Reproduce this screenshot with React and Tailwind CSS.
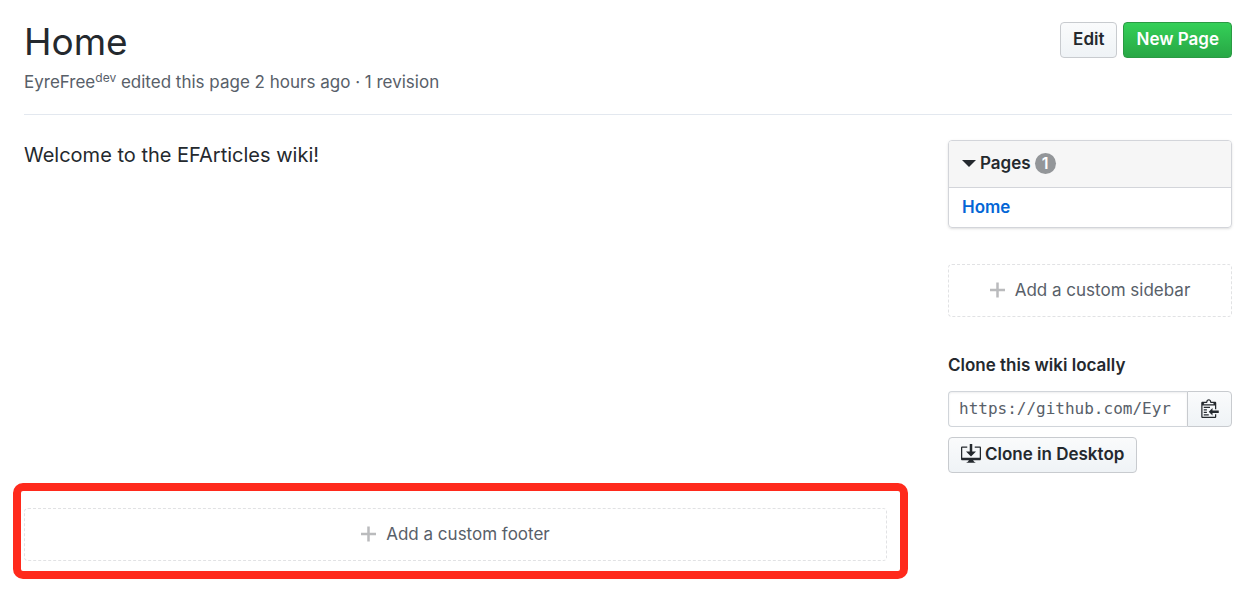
import React from "react";

const PlusIcon = () => (
  <svg viewBox="0 0 12 16" className="h-5 w-[15px] fill-[#babbbd]" aria-hidden="true">
    <path d="M12 9H7v5H5V9H0V7h5V2h2v5h5z" />
  </svg>
);

const ClipboardIcon = () => (
  <svg viewBox="0 0 14 16" className="h-5 w-[18px] fill-[#24292e]" aria-hidden="true">
    <path d="M2 13h4v1H2v-1zm5-6H2v1h5V7zm2 3V8l-3 3 3 3v-2h5v-2H9zM4.5 9H2v1h2.5V9zM2 12h2.5v-1H2v1zm9 1h1v2c-.02.28-.11.52-.3.7-.19.18-.42.28-.7.3H1c-.55 0-1-.45-1-1V4c0-.55.45-1 1-1h3c0-1.11.89-2 2-2 1.11 0 2 .89 2 2h3c.55 0 1 .45 1 1v5h-1V6H1v9h10v-2zM2 5h8c0-.55-.45-1-1-1H8c-.55 0-1-.45-1-1s-.45-1-1-1-1 .45-1 1-.45 1-1 1H3c-.55 0-1 .45-1 1z" />
  </svg>
);

const DesktopDownloadIcon = () => (
  <svg viewBox="0 0 16 16" className="size-5 fill-[#24292e]" aria-hidden="true">
    <path d="M4 6h3V0h2v6h3l-4 4-4-4zm11-4h-4v1h4v8H1V3h4V2H1c-.55 0-1 .45-1 1v9c0 .55.45 1 1 1h5.34c-.25.61-.86 1.39-2.34 2h8c-1.48-.61-2.09-1.39-2.34-2H15c.55 0 1-.45 1-1V3c0-.55-.45-1-1-1z" />
  </svg>
);

const grayButton =
  "flex items-center justify-center border border-[#c8cbcf] bg-linear-to-b from-[#fafbfc] to-[#eff3f6] pb-0.5 font-semibold";

function AddBlock({ children }) {
  return (
    <a
      href="#new"
      className="flex h-[53px] items-center justify-center gap-2.5 rounded border border-dashed border-[#e1e2e4] pb-0.5 text-[#586069]"
    >
      <PlusIcon />
      {children}
    </a>
  );
}

export default function App() {
  return (
    <div className="bg-white pt-[22px] pr-2 pb-7 pl-6 font-[Inter,sans-serif] text-[17px] leading-6 text-[#24292e]">
      <header className="flex items-start justify-between border-b border-[#e3e8ef] pb-5">
        <div>
          <h1 className="text-[37px] leading-10">Home</h1>
          <p className="mt-2 text-[#586069]">
            EyreFree<sup className="text-xs">dev</sup> edited this page 2 hours ago · 1 revision
          </p>
        </div>
        <div className="flex gap-1.5">
          <button className={`${grayButton} h-9 rounded px-3`}>Edit</button>
          <button className="flex h-9 items-center rounded border border-[#2a9a43] bg-linear-to-b from-[#34d058] to-[#28a745] px-3 pb-0.5 font-semibold text-white">
            New Page
          </button>
        </div>
      </header>

      <div className="flex gap-[61px] pt-[25px]">
        <main className="flex min-w-0 flex-1 flex-col">
          <p className="text-[20px] leading-[30px]">Welcome to the EFArticles wiki!</p>
          <div className="relative mt-[338px]">
            <AddBlock>Add a custom footer</AddBlock>
            <div className="pointer-events-none absolute -top-[25px] -right-[21px] -bottom-[18px] -left-[11px] rounded-[10px] border-8 border-[#ff2a1c]" />
          </div>
        </main>

        <aside className="w-[284px] shrink-0">
          <section className="overflow-hidden rounded border border-[#d3d5da] shadow-sm">
            <h2 className="flex h-[47px] items-center border-b border-[#d3d5da] bg-[#f6f6f6] px-[13px] pb-0.5 font-semibold">
              <button className="flex items-center gap-1">
                <svg viewBox="0 0 14 7" className="h-[7px] w-3.5 fill-[#24292e]" aria-hidden="true">
                  <path d="M0 0h14L7 7z" />
                </svg>
                Pages
                <span className="flex size-[21px] items-center justify-center rounded-full bg-[#939699] text-base text-white">
                  1
                </span>
              </button>
            </h2>
            <a href="#home" className="flex h-[39px] items-center px-[13px] pb-0.5 font-semibold text-[#0366d6]">
              Home
            </a>
          </section>

          <div className="mt-9">
            <AddBlock>Add a custom sidebar</AddBlock>
          </div>

          <label htmlFor="clone-url" className="mt-9 block font-semibold">
            Clone this wiki locally
          </label>
          <div className="mt-3.5 flex h-9">
            <input
              id="clone-url"
              readOnly
              defaultValue="https://github.com/Eyr"
              className="min-w-0 flex-1 rounded-l border border-r-0 border-[#d1d5da] px-2.5 font-['DejaVu_Sans_Mono',monospace] text-base text-[#586069] shadow-[inset_0_1px_2px_rgba(27,31,35,0.075)]"
            />
            <button aria-label="Copy" className={`${grayButton} w-[45px] rounded-r`}>
              <ClipboardIcon />
            </button>
          </div>
          <button className={`${grayButton} mt-2.5 h-9 gap-1 rounded px-3`}>
            <DesktopDownloadIcon />
            Clone in Desktop
          </button>
        </aside>
      </div>
    </div>
  );
}
